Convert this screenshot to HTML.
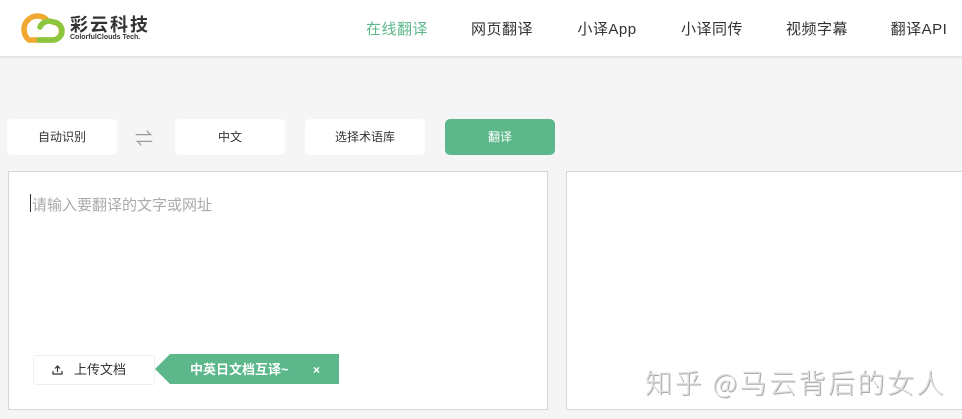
<!DOCTYPE html>
<html><head><meta charset="utf-8"><style>
*{margin:0;padding:0;box-sizing:border-box}
body{width:962px;height:419px;overflow:hidden;background:#f5f5f5;font-family:"Liberation Sans","Noto Sans CJK SC",sans-serif;position:relative}
.hd{position:absolute;left:0;top:0;width:962px;height:57px;background:#fff;border-bottom:1px solid #e2e2e2;box-shadow:0 1px 3px rgba(0,0,0,.08)}
.nav{position:absolute;top:18px;font-size:15px;color:#333;transform:translateX(-50%);white-space:nowrap;letter-spacing:.5px}
.btn{position:absolute;top:119px;height:36px;background:#fff;border-radius:5px;font-size:12px;color:#333;text-align:center;line-height:36px}
.box{position:absolute;top:171px;height:239px;background:#fff;border:1px solid #d6d6d6}
</style></head><body>
<div class="hd">
<svg style="position:absolute;left:15px;top:9px" width="50" height="36" viewBox="0 0 50 36"><path d="M31 10 A13 13 0 1 0 14 31 L37 31 A9 9 0 0 0 38 13" fill="none" stroke="#f0a830" stroke-width="5.5" stroke-linecap="round"/><path d="M24 31 L38 31 A9 9 0 0 0 38 13 A10 10 0 0 0 25 18" fill="none" stroke="#8cc63f" stroke-width="5.5" stroke-linecap="round"/></svg>
<div style="position:absolute;left:70px;top:11px;font-size:18px;font-weight:bold;color:#333;letter-spacing:2px">彩云科技</div>
<div style="position:absolute;left:70px;top:34px;font-size:7px;font-weight:bold;color:#333">ColorfulClouds Tech.</div>
<div class="nav" style="left:397px;color:#5cb88b">在线翻译</div>
<div class="nav" style="left:502px">网页翻译</div>
<div class="nav" style="left:607px">小译App</div>
<div class="nav" style="left:712px">小译同传</div>
<div class="nav" style="left:817px">视频字幕</div>
<div class="nav" style="left:919px">翻译API</div>
</div>
<div class="btn" style="left:7px;width:110px">自动识别</div>
<div style="position:absolute;left:135px;top:125px;font-size:18px;color:#999">⇌</div>
<div class="btn" style="left:175px;width:110px">中文</div>
<div class="btn" style="left:305px;width:120px">选择术语库</div>
<div class="btn" style="left:445px;width:110px;background:#5cb88b;color:#fff">翻译</div>
<div class="box" style="left:8px;width:540px">
<div style="position:absolute;left:21px;top:22px;width:1px;height:18px;background:#333"></div>
<div style="position:absolute;left:23px;top:22px;font-size:15px;color:#aaa">请输入要翻译的文字或网址</div>
<div style="position:absolute;left:24px;top:183px;width:122px;height:30px;border:1px solid #eee;border-radius:3px;background:#fff;font-size:13px;color:#333;line-height:28px;padding-left:40px">上传文档
<svg style="position:absolute;left:18px;top:9px" width="11" height="10" viewBox="0 0 11 10"><path d="M5.5 7V1M3 3.5L5.5 1 8 3.5M1 6v3h9V6" fill="none" stroke="#333" stroke-width="1.2"/></svg></div>
<svg style="position:absolute;left:146px;top:182px" width="185" height="30"><polygon points="0,15 15,0 184,0 184,30 15,30" fill="#5cb88b"/><text x="35" y="20" font-size="13" font-weight="bold" fill="#fff" font-family="Liberation Sans,Noto Sans CJK SC,sans-serif">中英日文档互译~</text><text x="158" y="20" font-size="12" font-weight="bold" fill="#fff" font-family="Liberation Sans,sans-serif">×</text></svg>
</div>
<div class="box" style="left:566px;width:400px"></div>
<div style="position:absolute;left:645px;top:362px;font-size:27px;font-weight:300;color:#e0e0e0;text-shadow:1px 1px 0 #aaa;letter-spacing:2.5px;font-family:'Noto Sans CJK SC',sans-serif">知乎 @马云背后的女人</div>
</body></html>
